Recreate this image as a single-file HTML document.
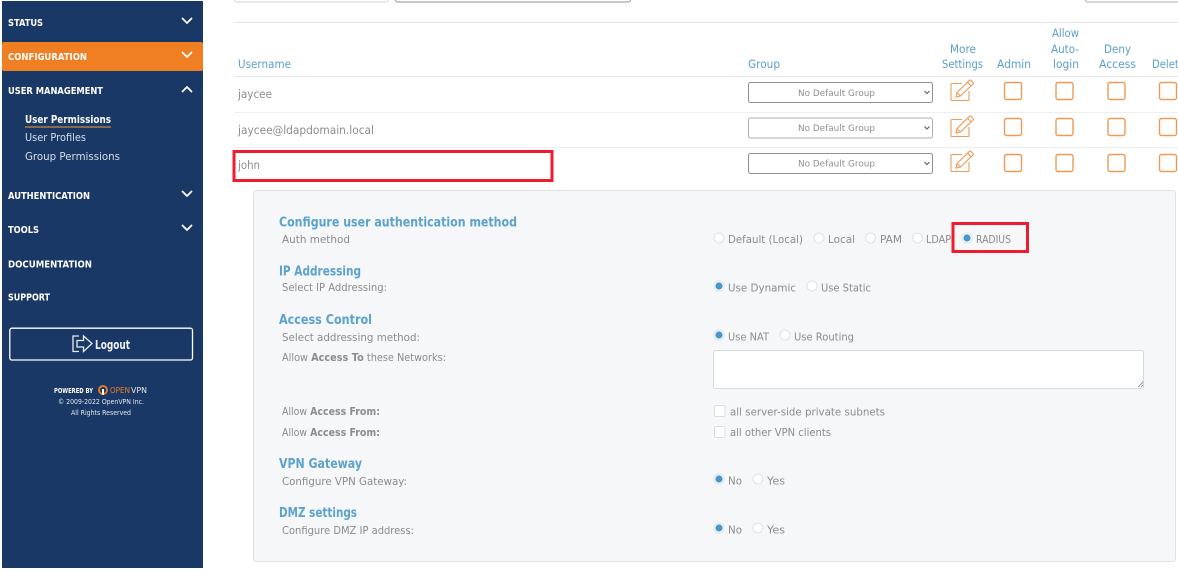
<!DOCTYPE html>
<html lang="en"><head><meta charset="utf-8"><title>User Permissions</title>
<style>
html,body{margin:0;padding:0;background:#fff;width:1178px;height:572px;overflow:hidden}
svg{display:block;font-family:"DejaVu Sans","Liberation Sans",sans-serif}
.n{font-size:9.500px;font-weight:700;fill:#fff}
.s{font-size:11px;fill:#d8dfe9}
.h{font-size:11.500px;fill:#5a9fcb}
.u{font-size:11.500px;fill:#8c8c8c}
.g{font-size:9px;fill:#8f8f8f}
.t{font-size:13.500px;font-weight:700;fill:#5ba2cd}
.l{font-size:10.500px;fill:#8b8b8b}
.f{font-size:7px;fill:#e4e8ee}
</style></head><body>
<svg width="1178" height="572" viewBox="0 0 1178 572" xmlns="http://www.w3.org/2000/svg">
<defs>
<g id="pen" fill="none" stroke="#ee9a55" stroke-width="1.100"><path d="M962 83.500h-10a1 1 0 0 0-1 1v15a1 1 0 0 0 1 1h16a1 1 0 0 0 1-1v-8.500"/><path d="M956 97l1-4.500L969.500 80.300a1 1 0 0 1 1.400 0l2.200 2.200a1 1 0 0 1 0 1.400L960.500 96z"/><path d="M967.500 82.300l3.600 3.600M957 92.500l3.500 3.500"/></g>
<rect id="cb" width="17" height="17" rx="2" fill="#fff" stroke="#ee9a55" stroke-width="1.400"/>
<g id="sel"><rect x="748.500" y="0.500" width="184" height="20" rx="2" fill="#fff" stroke="#8b929b"/><path d="M924.500 9l2.500 2.500 2.500-2.500" fill="none" stroke="#666" stroke-width="1.200"/></g>
<g id="sel2"><rect x="748.500" y="0.500" width="184" height="20" rx="2" fill="#fff" stroke="#aab0b6"/><path d="M924.500 9l2.500 2.500 2.500-2.500" fill="none" stroke="#666" stroke-width="1.200"/></g>
<g id="ro"><circle r="5" fill="#fff" stroke="#dfe1e4"/></g>
<g id="rc"><circle r="5" fill="#fff" stroke="#dfe1e4"/><circle r="3.600" fill="#4897c9"/></g>
<path id="dn" d="M-4.500-2.500L0 2l4.500-4.500" fill="none" stroke="#fff" stroke-width="1.800" stroke-linecap="round" stroke-linejoin="round"/>
</defs>

<rect x="0" y="0" width="1178" height="572" fill="#fff"/>
<rect x="2" y="1" width="201" height="567" fill="#1a3866"/>
<rect x="2" y="42" width="201" height="29" rx="2" fill="#ef7f22"/>
<text class="n" x="8" y="26" textLength="35" lengthAdjust="spacingAndGlyphs">STATUS</text>
<text class="n" x="8" y="60" textLength="79" lengthAdjust="spacingAndGlyphs">CONFIGURATION</text>
<text class="n" x="8" y="94" textLength="95" lengthAdjust="spacingAndGlyphs">USER  MANAGEMENT</text>
<text class="s" x="25" y="123" textLength="86" lengthAdjust="spacingAndGlyphs" style="fill:#fff;font-weight:700">User Permissions</text>
<rect x="25" y="126.500" width="86" height="1" fill="#f0a030"/>
<text class="s" x="25" y="141" textLength="61" lengthAdjust="spacingAndGlyphs">User Profiles</text>
<text class="s" x="25" y="160" textLength="95" lengthAdjust="spacingAndGlyphs">Group Permissions</text>
<text class="n" x="8" y="199" textLength="82" lengthAdjust="spacingAndGlyphs">AUTHENTICATION</text>
<text class="n" x="8" y="233" textLength="31" lengthAdjust="spacingAndGlyphs">TOOLS</text>
<text class="n" x="8" y="267.500" textLength="84" lengthAdjust="spacingAndGlyphs">DOCUMENTATION</text>
<text class="n" x="8" y="300.500" textLength="42" lengthAdjust="spacingAndGlyphs">SUPPORT</text>
<use href="#dn" x="187" y="21"/><use href="#dn" x="187" y="55"/>
<path d="M182.500 91.500L187 87l4.500 4.500" fill="none" stroke="#fff" stroke-width="1.800" stroke-linecap="round" stroke-linejoin="round"/>
<use href="#dn" x="187" y="194"/><use href="#dn" x="187" y="228"/>
<rect x="9.800" y="328.200" width="182.700" height="31.800" rx="2" fill="none" stroke="#fff" stroke-width="1.300"/>
<g fill="none" stroke="#e8edf3" stroke-width="1.300"><path d="M79 336h-6v15.500h6"/><path d="M77 340.500h6.500V336l8.500 7.500-8.500 8v-4.500H77z"/></g>
<text x="95" y="349" textLength="35" lengthAdjust="spacingAndGlyphs" style="font-size:12px;font-weight:700;fill:#eef1f5">Logout</text>
<text class="f" x="54" y="393" textLength="39" lengthAdjust="spacingAndGlyphs" style="font-weight:700;fill:#fff">POWERED BY</text>
<circle cx="103" cy="390" r="4" fill="none" stroke="#ef7f22" stroke-width="1.800"/><rect x="102" y="389" width="2" height="6" fill="#fff"/>
<text class="f" x="110" y="393" textLength="20" lengthAdjust="spacingAndGlyphs" style="font-size:8px;fill:#ef7f22">OPEN</text>
<text class="f" x="131" y="393" textLength="16" lengthAdjust="spacingAndGlyphs" style="font-size:8px">VPN</text>
<text class="f" x="58" y="404" textLength="86" lengthAdjust="spacingAndGlyphs">© 2009-2022 OpenVPN Inc.</text>
<text class="f" x="71" y="415" textLength="60" lengthAdjust="spacingAndGlyphs">All Rights Reserved</text>

<rect x="234.500" y="-8" width="154" height="10" rx="2" fill="#fff" stroke="#d4d4d4"/>
<rect x="395.500" y="-8" width="235" height="10" rx="2" fill="#fff" stroke="#8b929b"/>
<rect x="1085.500" y="-8" width="100" height="10" rx="2" fill="#fff" stroke="#aab0b6"/>
<g fill="#e6e6e6"><rect x="234" y="22" width="944" height="1"/><rect x="234" y="76" width="944" height="1"/></g>
<g fill="#eeeeee"><rect x="234" y="112" width="944" height="1"/><rect x="234" y="147" width="944" height="1"/></g>

<text class="h" x="238" y="68" textLength="53" lengthAdjust="spacingAndGlyphs">Username</text>
<text class="h" x="748" y="68" textLength="32" lengthAdjust="spacingAndGlyphs">Group</text>
<text class="h" x="950" y="53" textLength="26" lengthAdjust="spacingAndGlyphs">More</text>
<text class="h" x="942" y="68" textLength="41" lengthAdjust="spacingAndGlyphs">Settings</text>
<text class="h" x="997" y="68" textLength="34" lengthAdjust="spacingAndGlyphs">Admin</text>
<text class="h" x="1052" y="37" textLength="27" lengthAdjust="spacingAndGlyphs">Allow</text>
<text class="h" x="1051" y="53" textLength="28" lengthAdjust="spacingAndGlyphs">Auto-</text>
<text class="h" x="1053" y="68" textLength="26" lengthAdjust="spacingAndGlyphs">login</text>
<text class="h" x="1104" y="53" textLength="27" lengthAdjust="spacingAndGlyphs">Deny</text>
<text class="h" x="1099" y="68" textLength="37" lengthAdjust="spacingAndGlyphs">Access</text>
<text class="h" x="1152" y="68" textLength="33" lengthAdjust="spacingAndGlyphs">Delete</text>

<text class="u" x="238" y="98" textLength="34" lengthAdjust="spacingAndGlyphs">jaycee</text>
<text class="u" x="238" y="134" textLength="136" lengthAdjust="spacingAndGlyphs">jaycee@ldapdomain.local</text>
<text class="u" x="238" y="169" textLength="22" lengthAdjust="spacingAndGlyphs">john</text>

<use href="#sel" y="82"/><use href="#sel2" y="117.500"/><use href="#sel" y="153"/>
<text class="g" x="798" y="96" textLength="77" lengthAdjust="spacingAndGlyphs">No Default Group</text>
<text class="g" x="798" y="131" textLength="77" lengthAdjust="spacingAndGlyphs">No Default Group</text>
<text class="g" x="798" y="166.500" textLength="77" lengthAdjust="spacingAndGlyphs">No Default Group</text>
<use href="#pen"/><use href="#pen" y="36"/><use href="#pen" y="71"/>
<use href="#cb" x="1004.500" y="82.500"/><use href="#cb" x="1056" y="82.500"/><use href="#cb" x="1108" y="82.500"/><use href="#cb" x="1159.500" y="82.500"/>
<use href="#cb" x="1004.500" y="118.500"/><use href="#cb" x="1056" y="118.500"/><use href="#cb" x="1108" y="118.500"/><use href="#cb" x="1159.500" y="118.500"/>
<use href="#cb" x="1004.500" y="154.500"/><use href="#cb" x="1056" y="154.500"/><use href="#cb" x="1108" y="154.500"/><use href="#cb" x="1159.500" y="154.500"/>

<rect x="234" y="151.500" width="318" height="29" fill="none" stroke="#ed1c2e" stroke-width="3"/>

<rect x="253.500" y="190.500" width="922" height="371" rx="3" fill="#f6f7f9" stroke="#e0e1e3"/>
<text class="t" x="279" y="226.500" textLength="238" lengthAdjust="spacingAndGlyphs">Configure user authentication method</text>
<text class="l" x="282" y="243" textLength="68" lengthAdjust="spacingAndGlyphs">Auth method</text>
<text class="t" x="279" y="275.500" textLength="82" lengthAdjust="spacingAndGlyphs">IP Addressing</text>
<text class="l" x="282" y="291" textLength="105" lengthAdjust="spacingAndGlyphs">Select IP Addressing:</text>
<text class="t" x="279" y="324" textLength="93" lengthAdjust="spacingAndGlyphs">Access Control</text>
<text class="l" x="282" y="341" textLength="138" lengthAdjust="spacingAndGlyphs">Select addressing method:</text>
<text class="l" x="282" y="361" textLength="164" lengthAdjust="spacingAndGlyphs">Allow <tspan font-weight="700">Access To</tspan> these Networks:</text>
<text class="l" x="282" y="415" textLength="98" lengthAdjust="spacingAndGlyphs">Allow <tspan font-weight="700">Access From:</tspan></text>
<text class="l" x="282" y="436" textLength="98" lengthAdjust="spacingAndGlyphs">Allow <tspan font-weight="700">Access From:</tspan></text>
<text class="t" x="279" y="468" textLength="83" lengthAdjust="spacingAndGlyphs">VPN Gateway</text>
<text class="l" x="282" y="485" textLength="125" lengthAdjust="spacingAndGlyphs">Configure VPN Gateway:</text>
<text class="t" x="279" y="517" textLength="78" lengthAdjust="spacingAndGlyphs">DMZ settings</text>
<text class="l" x="282" y="534" textLength="132" lengthAdjust="spacingAndGlyphs">Configure DMZ IP address:</text>

<use href="#ro" x="719" y="238"/><use href="#ro" x="819" y="238"/><use href="#ro" x="870.500" y="238"/><use href="#ro" x="917.500" y="238"/><use href="#rc" x="967" y="238"/>
<text class="l" x="728" y="243" textLength="75" lengthAdjust="spacingAndGlyphs">Default (Local)</text>
<text class="l" x="828" y="243" textLength="27" lengthAdjust="spacingAndGlyphs">Local</text>
<text class="l" x="880" y="243" textLength="22" lengthAdjust="spacingAndGlyphs">PAM</text>
<text class="l" x="926" y="243" textLength="25" lengthAdjust="spacingAndGlyphs">LDAP</text>
<text class="l" x="976" y="243" textLength="35" lengthAdjust="spacingAndGlyphs">RADIUS</text>
<rect x="953" y="223.500" width="74.500" height="28" fill="none" stroke="#ed1c2e" stroke-width="3"/>

<use href="#rc" x="719" y="286"/><use href="#ro" x="812" y="286"/>
<text class="l" x="728" y="291.500" textLength="68" lengthAdjust="spacingAndGlyphs">Use Dynamic</text>
<text class="l" x="821" y="291.500" textLength="50" lengthAdjust="spacingAndGlyphs">Use Static</text>
<use href="#rc" x="719" y="335"/><use href="#ro" x="785" y="335"/>
<text class="l" x="728" y="340.500" textLength="41" lengthAdjust="spacingAndGlyphs">Use NAT</text>
<text class="l" x="794" y="340.500" textLength="60" lengthAdjust="spacingAndGlyphs">Use Routing</text>

<rect x="713.500" y="350.500" width="430" height="38" rx="2" fill="#fff" stroke="#d5d9de"/>
<path d="M1138 387l5-5M1141 387l2-2" stroke="#777" stroke-width="0.800"/>
<rect x="714.500" y="405.500" width="10.500" height="11" rx="1.500" fill="#fff" stroke="#dcdcdc"/>
<rect x="714.500" y="426.500" width="10.500" height="11" rx="1.500" fill="#fff" stroke="#dcdcdc"/>
<text class="l" x="730" y="415.500" textLength="155" lengthAdjust="spacingAndGlyphs">all server-side private subnets</text>
<text class="l" x="730" y="436" textLength="101" lengthAdjust="spacingAndGlyphs">all other VPN clients</text>

<use href="#rc" x="719" y="479"/><use href="#ro" x="758" y="479"/>
<text class="l" x="728" y="484.500" textLength="14" lengthAdjust="spacingAndGlyphs">No</text>
<text class="l" x="767" y="484.500" textLength="18" lengthAdjust="spacingAndGlyphs">Yes</text>
<use href="#rc" x="719" y="528"/><use href="#ro" x="758" y="528"/>
<text class="l" x="728" y="533.500" textLength="14" lengthAdjust="spacingAndGlyphs">No</text>
<text class="l" x="767" y="533.500" textLength="18" lengthAdjust="spacingAndGlyphs">Yes</text>
</svg>
</body></html>
